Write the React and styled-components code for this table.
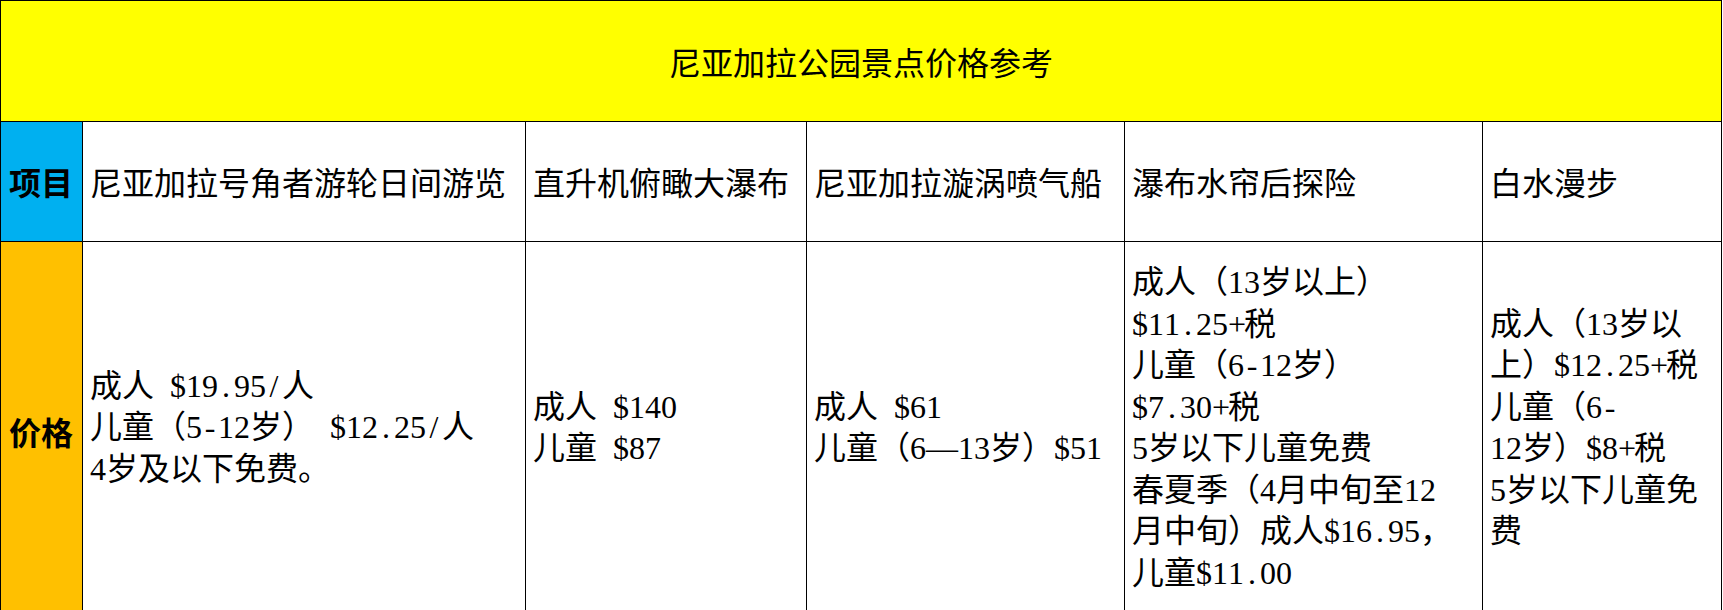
import React from "react";
import styled, { createGlobalStyle } from "styled-components";

const YELLOW = "#ffff00";
const BLUE = "#00b0f0";
const ORANGE = "#ffc000";
const LINE = "#000000";

const GlobalStyle = createGlobalStyle`
  html, body {
    margin: 0;
    padding: 0;
    background: #ffffff;
    overflow: hidden;
  }
  body {
    font-family: "Liberation Serif", "Noto Sans CJK SC", serif;
    color: #000000;
  }
`;

const Sheet = styled.div`
  display: grid;
  grid-template-columns: 82px 443px 281px 318px 358px 239px;
  grid-template-rows: 121px 120px 381px;
  width: max-content;
  border-top: 1px solid ${LINE};
  border-left: 1px solid ${LINE};
  font-size: 32px;
`;

const Cell = styled.div`
  box-sizing: border-box;
  display: flex;
  flex-direction: column;
  justify-content: center;
  padding: 0 0 2px 7px;
  border-right: 1px solid ${LINE};
  border-bottom: 1px solid ${LINE};
  background: ${(p) => p.$fill || "#ffffff"};
  white-space: nowrap;
`;

const TitleCell = styled(Cell)`
  grid-column: 1 / -1;
  align-items: center;
  padding: 0;
  background: ${YELLOW};
`;

const LabelCell = styled(Cell)`
  font-weight: 700;
  padding-left: 8px;
`;

const PriceCell = styled(Cell)`
  padding-bottom: 8px;
`;

const Line = styled.div`
  line-height: 41.5px;
`;

// half-width slot for latin characters, like the sheet's song-style font
const Half = styled.span`
  display: inline-block;
  width: 0.5em;
  text-align: center;
  white-space: pre;
`;

// split a string so that every ascii character takes half an em
function Text({ children }) {
  const parts = [];
  let run = "";
  [...children].forEach((ch, i) => {
    if (ch.charCodeAt(0) < 128) {
      if (run) {
        parts.push(run);
        run = "";
      }
      parts.push(<Half key={i}>{ch}</Half>);
    } else {
      run += ch;
    }
  });
  if (run) parts.push(run);
  return <>{parts}</>;
}

const attractions = [
  {
    name: "尼亚加拉号角者游轮日间游览",
    price: ["成人 $19.95/人", "儿童（5-12岁） $12.25/人", "4岁及以下免费。"]
  },
  {
    name: "直升机俯瞰大瀑布",
    price: ["成人 $140", "儿童 $87"]
  },
  {
    name: "尼亚加拉漩涡喷气船",
    price: ["成人 $61", "儿童（6—13岁）$51"]
  },
  {
    name: "瀑布水帘后探险",
    price: [
      "成人（13岁以上）",
      "$11.25+税",
      "儿童（6-12岁）",
      "$7.30+税",
      "5岁以下儿童免费",
      "春夏季（4月中旬至12",
      "月中旬）成人$16.95，",
      "儿童$11.00"
    ]
  },
  {
    name: "白水漫步",
    price: [
      "成人（13岁以",
      "上）$12.25+税",
      "儿童（6-",
      "12岁）$8+税",
      "5岁以下儿童免",
      "费"
    ]
  }
];

export default function App() {
  return (
    <>
      <GlobalStyle />
      <Sheet>
        <TitleCell>尼亚加拉公园景点价格参考</TitleCell>

        <LabelCell $fill={BLUE}>项目</LabelCell>
        {attractions.map((a) => (
          <Cell key={a.name}>{a.name}</Cell>
        ))}

        <LabelCell $fill={ORANGE}>价格</LabelCell>
        {attractions.map((a) => (
          <PriceCell key={a.name + "-price"}>
            {a.price.map((line) => (
              <Line key={line}>
                <Text>{line}</Text>
              </Line>
            ))}
          </PriceCell>
        ))}
      </Sheet>
    </>
  );
}
